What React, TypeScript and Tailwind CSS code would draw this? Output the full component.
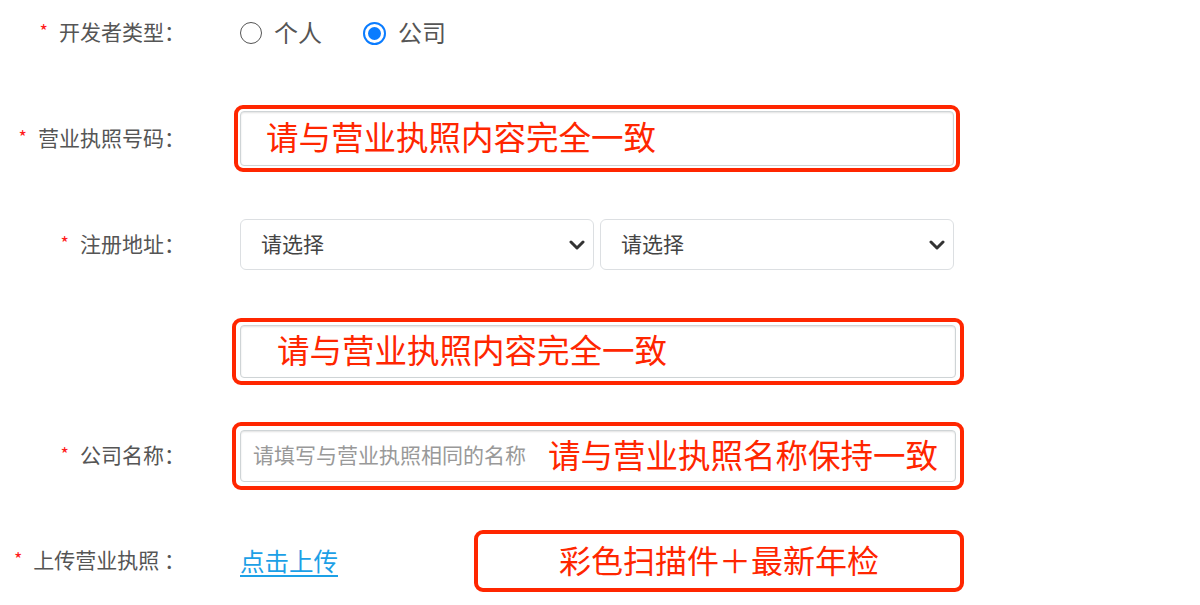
import React from "react";

function Label({ text }: { text: string }) {
  return (
    <div className="w-[185px] shrink-0 flex justify-end items-center text-[21px] text-[#555]">
      <span className="text-[#ff1a1a] text-[18px] leading-none mr-[11px] -translate-y-[3px]">*</span>
      <span className="whitespace-nowrap -translate-y-[1px]">{text}</span>
    </div>
  );
}

function Chevron() {
  return (
    <svg width="16" height="10" viewBox="0 0 16 10" className="shrink-0">
      <path d="M2 2 L8 8 L14 2" fill="none" stroke="#333" strokeWidth="3" strokeLinecap="round" strokeLinejoin="round" />
    </svg>
  );
}

function Select() {
  return (
    <div className="w-[354px] h-[51px] rounded-[6px] border border-[#dcdfe2] bg-white flex items-center justify-between pl-[20px] pr-[8px] text-[21px] text-[#444]">
      <span className="-translate-y-[1px]">请选择</span>
      <Chevron />
    </div>
  );
}

export default function App() {
  return (
    <div className="w-[1200px] h-[605px] bg-white overflow-hidden font-['Noto_Sans_CJK_SC','Noto_Sans',sans-serif] flex flex-col">
      {/* Row 1 */}
      <div className="flex items-center h-[66px] shrink-0">
        <Label text="开发者类型：" />
        <div className="ml-[55px] flex items-center text-[24px] text-[#555]">
          <span className="w-[22px] h-[22px] rounded-full border-[1.5px] border-[#555] mr-[12px]" />
          <span className="-translate-y-[1px]">个人</span>
          <span className="ml-[41px] w-[23px] h-[23px] rounded-full border-[2px] border-[#0a7cff] flex items-center justify-center mr-[12px]">
            <span className="w-[13px] h-[13px] rounded-full bg-[#0a7cff]" />
          </span>
          <span className="-translate-y-[1px]">公司</span>
        </div>
      </div>

      {/* Row 2 */}
      <div className="flex items-center h-[67px] mt-[39px] shrink-0">
        <Label text="营业执照号码：" />
        <div className="ml-[49px] w-[726px] h-[67px] border-[4px] border-[#ff2600] rounded-[9px] p-[2px]">
          <div className="h-full border border-[#cfd4d6] rounded-[4px] shadow-[inset_0_1px_2px_rgba(0,0,0,0.12)] bg-white flex items-center pl-[25px] text-[32.5px] text-[#ff2600]">
            <span className="-translate-y-[2px]">请与营业执照内容完全一致</span>
          </div>
        </div>
      </div>

      {/* Row 3 */}
      <div className="flex items-center h-[51px] mt-[47px] shrink-0">
        <Label text="注册地址：" />
        <div className="ml-[55px] flex gap-[6px]">
          <Select />
          <Select />
        </div>
      </div>

      {/* Row 4 */}
      <div className="flex items-center h-[67px] mt-[48px] shrink-0">
        <div className="w-[185px] shrink-0" />
        <div className="ml-[47px] w-[732px] h-[67px] border-[4px] border-[#ff2600] rounded-[9px] px-[4px] py-[3px]">
          <div className="h-full border border-[#cfd4d6] rounded-[4px] shadow-[inset_0_1px_2px_rgba(0,0,0,0.12)] bg-white flex items-center pl-[36px] text-[32.5px] text-[#ff2600]">
            <span className="-translate-y-[2px]">请与营业执照内容完全一致</span>
          </div>
        </div>
      </div>

      {/* Row 5 */}
      <div className="flex items-center h-[68px] mt-[37px] shrink-0">
        <Label text="公司名称：" />
        <div className="ml-[47px] w-[732px] h-[68px] border-[4px] border-[#ff2600] rounded-[9px] px-[4px] py-[4px]">
          <div className="h-full border border-[#cfd4d6] rounded-[4px] shadow-[inset_0_1px_2px_rgba(0,0,0,0.12)] bg-white flex items-center pl-[12px]">
            <span className="text-[21px] text-[#999] -translate-y-[1px]">请填写与营业执照相同的名称</span>
            <span className="ml-[22px] text-[32.5px] text-[#ff2600] -translate-y-[2px]">请与营业执照名称保持一致</span>
          </div>
        </div>
      </div>

      {/* Row 6 */}
      <div className="flex items-center h-[62px] mt-[40px] shrink-0">
        <Label text="上传营业执照 ：" />
        <a className="ml-[55px] text-[24.5px] text-[#1ca0e6] underline underline-offset-[4px] cursor-pointer">点击上传</a>
        <div className="ml-[136px] w-[490px] h-[62px] border-[4px] border-[#ff2600] rounded-[9px] bg-white flex items-center justify-center text-[32px] text-[#ff2600]">
          <span className="-translate-y-[2px]">彩色扫描件＋最新年检</span>
        </div>
      </div>
    </div>
  );
}
